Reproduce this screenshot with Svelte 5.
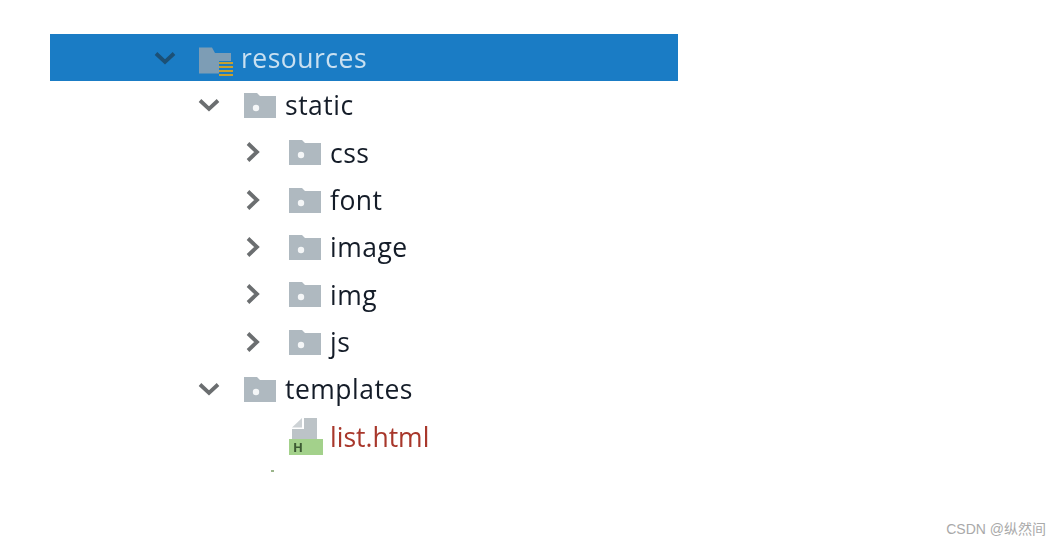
<script>
  const rows = [
    { name: 'resources', depth: 0, kind: 'res', open: true, selected: true },
    { name: 'static', depth: 1, kind: 'folder', open: true },
    { name: 'css', depth: 2, kind: 'folder' },
    { name: 'font', depth: 2, kind: 'folder' },
    { name: 'image', depth: 2, kind: 'folder' },
    { name: 'img', depth: 2, kind: 'folder' },
    { name: 'js', depth: 2, kind: 'folder' },
    { name: 'templates', depth: 1, kind: 'folder', open: true },
    { name: 'list.html', depth: 2, kind: 'html' }
  ];
</script>

<main class="page">
  <ul class="tree">
    {#each rows as row}
      <li class="row" class:selected={row.selected} class:d0={row.depth === 0} class:d1={row.depth === 1} class:d2={row.depth === 2}>
        <span class="arrow">
          {#if row.kind !== 'html'}
            <svg width="24" height="24" viewBox="0 0 24 24" fill="none" stroke-width="3.8">
              {#if row.open}
                <path class="chev" d="M3 7.5 L12 16 L21 7.5" />
              {:else}
                <path class="chev" d="M6 3.5 L15 12 L6 20.5" />
              {/if}
            </svg>
          {/if}
        </span>
        <span class="icon">
          {#if row.kind === 'folder'}
            <svg width="34" height="28" viewBox="0 0 34 28">
              <path d="M1 2 H14 L17 5 H33 V27 H1 Z" fill="#afb9c0" />
              <circle cx="13" cy="17" r="3.2" fill="#f4f6f7" />
            </svg>
          {:else if row.kind === 'res'}
            <svg width="36" height="40" viewBox="0 0 36 40">
              <path d="M0 9.5 H13 L16 15 H32 V23 H20 V35.5 H0 Z" fill="#7d9db5" />
              <path d="M20 25 H34 M20 29 H34 M20 33 H34 M20 37 H34" stroke="#c9a02e" stroke-width="2.2" />
            </svg>
          {:else}
            <svg width="36" height="42" viewBox="0 0 36 42">
              <path d="M16 3 H29 V24 H4 V14 H16 Z" fill="#bcc3c7" />
              <path d="M4 12.5 L14 3 V12.5 Z" fill="#cdd2d5" />
              <rect x="1" y="24" width="34" height="16" fill="#a3d18b" />
              <text x="5" y="37" class="h">H</text>
            </svg>
          {/if}
        </span>
        <span class="label" class:red={row.kind === 'html'}>{row.name}</span>
      </li>
    {/each}
  </ul>
  <i class="speck"></i>
  <span class="mark">CSDN @纵然间</span>
</main>

<style>
  :global(body) {
    margin: 0;
    background: #fff;
  }
  .page {
    position: relative;
    width: 1060px;
    height: 544px;
    overflow: hidden;
    box-sizing: border-box;
    padding: 34px 0 0 50px;
    font-family: "Open Sans", "Noto Sans", sans-serif;
  }
  .tree {
    list-style: none;
    margin: 0;
    padding: 0;
    width: 628px;
    filter: blur(0.7px);
  }
  .row {
    display: flex;
    align-items: center;
    height: 47.35px;
    color: #141c28;
    font-size: 26.5px;
    letter-spacing: 0.5px;
  }
  .d0 { padding-left: 103px; }
  .d1 { padding-left: 147px; }
  .d2 { padding-left: 192px; }
  .selected {
    background: #1a7cc5;
    color: #c9e0f1;
  }
  .arrow {
    width: 24px;
    height: 24px;
    margin-right: 22px;
    flex: none;
  }
  .arrow svg { display: block; }
  .chev { stroke: #6b6e70; }
  .selected .chev { stroke: #1c5076; }
  .icon {
    width: 34px;
    margin-right: 8px;
    flex: none;
    display: flex;
    align-items: center;
  }
  .icon svg { display: block; flex: none; }
  .label { line-height: 1; padding-top: 1px; }
  .red { color: #a8372b; letter-spacing: 0; }
  .h {
    font-family: "Open Sans", sans-serif;
    font-size: 13px;
    font-weight: 700;
    fill: #3c5a33;
  }
  .speck {
    position: absolute;
    left: 271px;
    top: 470px;
    width: 3px;
    height: 2px;
    background: #9bb58b;
  }
  .mark {
    position: absolute;
    right: 14px;
    top: 518px;
    font-family: "Liberation Sans", "Noto Sans CJK SC", sans-serif;
    font-size: 14px;
    color: #a9a9a9;
  }
</style>
